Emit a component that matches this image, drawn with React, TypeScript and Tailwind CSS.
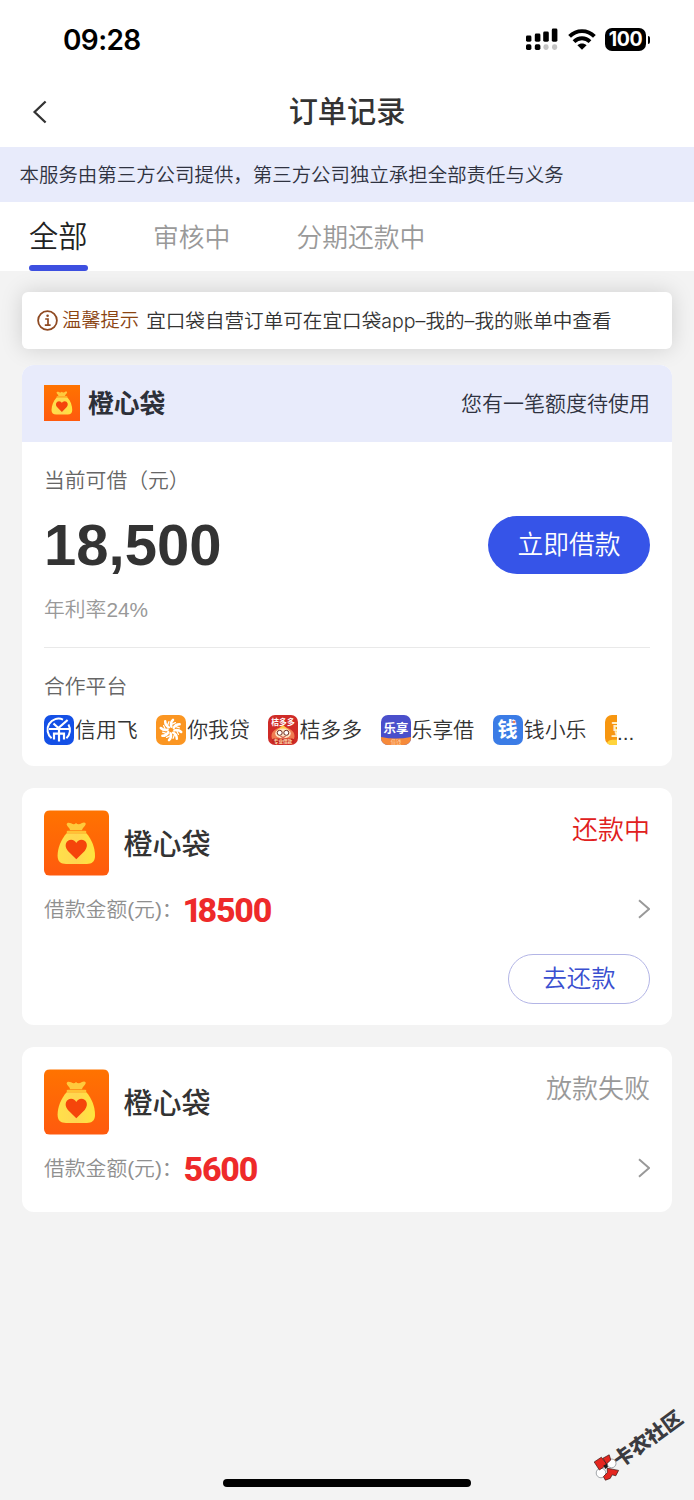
import { FC, ReactNode } from "react";

type IconProps = { className?: string };

const SignalIcon: FC = () => (
  <svg width="33" height="23" viewBox="0 0 33 23" className="shrink-0">
    <rect x="0" y="7.5" width="5.4" height="6.2" rx="1.4" />
    <rect x="8.8" y="5.5" width="5.6" height="8.2" rx="1.4" />
    <rect x="17.2" y="3.5" width="5.6" height="10.2" rx="1.4" />
    <rect x="25.8" y="0.5" width="5.6" height="13.2" rx="1.4" />
    <rect x="0" y="16.3" width="5.4" height="5.6" rx="1.6" />
    <rect x="8.8" y="16.3" width="5.6" height="5.6" rx="1.6" />
    <rect x="17.4" y="16.3" width="5.2" height="5.6" rx="2.4" fill="#c4c4c4" />
    <rect x="26" y="16.3" width="5.2" height="5.6" rx="2.4" fill="#c4c4c4" />
  </svg>
);

const WifiIcon: FC = () => (
  <svg width="28" height="21" viewBox="0 0 28 21" className="shrink-0">
    <g fill="none" stroke="#000" strokeWidth="3.9">
      <path d="M1.6 7.4 C8.6 0.4 19.4 0.4 26.4 7.4" />
      <path d="M6 12.6 C10.6 8.2 17.4 8.2 22 12.6" />
    </g>
    <path d="M14 20.8 L9.4 16.2 C12 13.8 16 13.8 18.6 16.2 Z" />
  </svg>
);

const ChevronLeft: FC = () => (
  <svg width="16" height="24" viewBox="0 0 16 24" fill="none">
    <path d="M13.6 1.5 L2.6 12 L13.6 22.5" stroke="#333" strokeWidth="2.3" />
  </svg>
);

const ChevronRight: FC = () => (
  <svg width="13" height="20" viewBox="0 0 13 20" fill="none">
    <path d="M2 1.2 L12 10 L2 18.8" stroke="#999" strokeWidth="1.9" />
  </svg>
);

const InfoIcon: FC = () => (
  <svg width="21" height="21" viewBox="0 0 21 21" fill="none" className="shrink-0">
    <circle cx="10.5" cy="10.5" r="9.4" stroke="#8f4a22" strokeWidth="1.8" />
    <circle cx="10.6" cy="5.8" r="1.3" fill="#8f4a22" />
    <path d="M8.2 9 H11 V15 M7.8 15.1 H13.6" stroke="#8f4a22" strokeWidth="1.7" />
  </svg>
);

const BagIcon: FC<IconProps> = ({ className }) => (
  <svg viewBox="0 0 66 66" className={className}>
    <defs>
      <linearGradient id="bagBack" x1="0" y1="0" x2="0" y2="1">
        <stop offset="0" stopColor="#ff7300" />
        <stop offset="1" stopColor="#ff5a0e" />
      </linearGradient>
      <linearGradient id="bagBody" x1="0" y1="0" x2="1" y2="0">
        <stop offset="0" stopColor="#ffe04a" />
        <stop offset="0.5" stopColor="#ffd650" />
        <stop offset="1" stopColor="#ffe63c" />
      </linearGradient>
    </defs>
    <rect width="66" height="66" fill="url(#bagBack)" />
    <path
      d="M26.5 20 C26 17.5 23.5 16.5 23 14.3 C23 12 25.5 12 27.5 13 C30 14.4 31 14.3 32.5 12.6 C34 14.3 36 14.3 38 13 C40.5 11.4 43 12 42.2 14.4 C41.5 16.4 39 17.5 38.5 20 Z"
      fill="#ffc93c"
    />
    <path
      d="M23 23 H43 C48.5 29 51.8 38 51.8 46 C51.8 52 48.5 54.3 43.5 54.3 H22.5 C17 54.3 13.8 52 13.8 46 C13.8 38 17.5 29 23 23 Z"
      fill="url(#bagBody)"
    />
    <rect x="23" y="20.6" width="20" height="2.6" rx="1.3" fill="#ffc234" />
    <path
      d="M32.8 49.5 L24.3 41 C19.5 35.5 23 29.8 27.5 29.8 C30 29.8 31.8 31.2 32.8 33 C33.8 31.2 35.6 29.8 38 29.8 C42.8 29.8 46 35.5 41.3 41 Z"
      fill="#f5450b"
    />
  </svg>
);

const XinyongfeiIcon: FC = () => (
  <svg width="30" height="30" viewBox="0 0 30 30" className="shrink-0">
    <rect width="30" height="30" rx="7" fill="#1450e6" />
    <path
      d="M19 4.6 A11 11 0 0 0 7.6 23.2 M24.4 9.4 A11 11 0 0 1 22.4 23.2"
      fill="none"
      stroke="#fff"
      strokeWidth="2"
    />
    <path
      d="M5 14 H25 M10 24.5 V18.6 H20 V24.5 M15 13 V26.5 M9.5 8.5 L14.4 13 L23.6 5"
      fill="none"
      stroke="#fff"
      strokeWidth="2.2"
    />
  </svg>
);

const NiwodaiIcon: FC = () => (
  <svg width="30" height="30" viewBox="0 0 30 30" className="shrink-0">
    <rect width="30" height="30" rx="7" fill="#fb9622" />
    <g fill="none" stroke="#fff" strokeWidth="2.5" strokeLinecap="round">
      {[0, 45, 90, 135, 180, 225, 270, 315].map((angle) => (
        <path key={angle} d="M15.4 11.6 C14.4 9 14.8 7 17 4.8" transform={`rotate(${angle} 15 15)`} />
      ))}
    </g>
    <g fill="none" stroke="#fff" strokeWidth="1.3" strokeLinecap="round">
      {[0, 45, 90, 135, 180, 225, 270, 315].map((angle) => (
        <path key={angle} d="M15 9.6 L19.4 7.6" transform={`rotate(${angle} 15 15)`} />
      ))}
    </g>
  </svg>
);

const JuduoduoIcon: FC = () => (
  <svg width="30" height="30" viewBox="0 0 30 30" className="shrink-0 font-['Noto_Sans_CJK_SC',sans-serif]">
    <rect width="30" height="30" rx="7" fill="#cf2b27" />
    <path d="M4 24 C2 18 6 13 15 12 C24 13 28 18 26 24 Z" fill="#ef7a50" />
    <path d="M9 15 L15 10 L21 15 Z" fill="#ffc648" />
    <ellipse cx="15" cy="18.5" rx="7.8" ry="5" fill="#ffe3c4" />
    <circle cx="11.7" cy="17.8" r="2.5" fill="#fff" stroke="#6d2a20" strokeWidth="1" />
    <circle cx="18.3" cy="17.8" r="2.5" fill="#fff" stroke="#6d2a20" strokeWidth="1" />
    <path d="M12.5 21.5 Q15 23.2 17.5 21.5" fill="none" stroke="#c23022" strokeWidth="1" />
    <text x="15" y="9.8" textAnchor="middle" fontSize="7.8" fontWeight="700" fill="#fff">
      桔多多
    </text>
    <rect x="4" y="23.6" width="22" height="5" rx="2" fill="#c3261f" />
    <text x="15" y="27.9" textAnchor="middle" fontSize="4.6" fontWeight="700" fill="#ffdcb0">
      专业借款
    </text>
  </svg>
);

const LexiangIcon: FC = () => (
  <svg width="30" height="30" viewBox="0 0 30 30" className="shrink-0 font-['Noto_Sans_CJK_SC',sans-serif]">
    <rect width="30" height="30" rx="7" fill="#4a4fcb" />
    <path d="M0 22 Q15 25 30 22 V23 A7 7 0 0 1 23 30 H7 A7 7 0 0 1 0 23 Z" fill="#f68a3a" />
    <text x="15" y="17.6" textAnchor="middle" fontSize="12.4" fontWeight="700" fill="#fff">
      乐享
    </text>
    <text x="15" y="28.6" textAnchor="middle" fontSize="5.2" fill="#ffd9b5">
      借钱
    </text>
  </svg>
);

const QianxiaoleIcon: FC = () => (
  <svg width="30" height="30" viewBox="0 0 30 30" className="shrink-0 font-['Noto_Sans_CJK_SC',sans-serif]">
    <rect width="30" height="30" rx="7" fill="#3b7ce6" />
    <text x="14.6" y="22.4" textAnchor="middle" fontSize="20" fontWeight="700" fill="#fff">
      钱
    </text>
    <circle cx="21" cy="7" r="1.3" fill="#f0805a" />
  </svg>
);

const ClippedIcon: FC = () => (
  <svg width="12" height="30" viewBox="0 0 12 30" className="shrink-0 font-['Noto_Sans_CJK_SC',sans-serif]">
    <path d="M7 0 H12 V30 H7 A7 7 0 0 1 0 23 V7 A7 7 0 0 1 7 0 Z" fill="#f7960f" />
    <path d="M2 28 C4 24 8 25 12 24.5 V30 H7 C5 30 3 29.4 2 28 Z" fill="#ffd43c" />
    <text x="6" y="20.5" fontSize="17" fontWeight="700" fill="#fff2c8">
      豆
    </text>
  </svg>
);

const MascotIcon: FC = () => (
  <svg width="28" height="28" viewBox="0 0 28 28" className="shrink-0">
    <circle cx="8" cy="20" r="4.8" fill="#fff" stroke="#8b9095" strokeWidth="0.8" />
    <circle cx="18.6" cy="10.4" r="4.4" fill="#fff" stroke="#8b9095" strokeWidth="0.8" />
    <g fill="#e4261f" stroke="#3a1513" strokeWidth="0.7">
      <path d="M1.2 9 L8.4 4.2 L14 11.6 L6.4 17 Z" />
      <path d="M10 5.2 L16.2 1.8 L17.8 7 L13.4 11 Z" />
      <path d="M14.2 15.2 L25.6 17.4 L22.8 22.8 L19.2 21.8 L17.2 25.4 L12.4 27.2 L10.4 23.6 L14.4 19.6 Z" />
    </g>
    <path d="M10.4 12.6 L14 10.8 L15 14 L12.2 16 Z" fill="#1d1d1d" />
  </svg>
);

const partners = [
  { name: "信用飞", icon: <XinyongfeiIcon /> },
  { name: "你我贷", icon: <NiwodaiIcon /> },
  { name: "桔多多", icon: <JuduoduoIcon /> },
  { name: "乐享借", icon: <LexiangIcon /> },
  { name: "钱小乐", icon: <QianxiaoleIcon /> },
];

type OrderProps = {
  amount: string;
  status: string;
  statusClass: string;
  className: string;
  children?: ReactNode;
};

const OrderCard: FC<OrderProps> = ({ amount, status, statusClass, className, children }) => (
  <section className={`rounded-xl bg-white px-[22px] pt-[22px] ${className}`}>
    <div className="flex h-[66px]">
      <BagIcon className="h-[66px] w-[65px] rounded-md" />
      <h3 className="ml-[14.5px] text-[29px] leading-[70px] font-medium">橙心袋</h3>
      <span className={`ml-auto text-[26px] leading-10 font-[350] ${statusClass}`}>{status}</span>
    </div>
    <div className="mt-[14px] flex h-10 items-center">
      <span className="w-[139.5px] text-[20.8px] whitespace-nowrap font-[350] text-[#8f8f8f]">借款金额(元)：</span>
      <span className="font-['Roboto',sans-serif] text-[34px] font-extrabold tracking-[-1.2px] text-[#ee2a2a]">
        {amount.startsWith("1") ? (
          <>
            <span className="-ml-px tracking-[-4.6px]">1</span>
            {amount.slice(1)}
          </>
        ) : (
          amount
        )}
      </span>
      <span className="-mt-0.5 ml-auto">
        <ChevronRight />
      </span>
    </div>
    {children}
  </section>
);

export default function App() {
  return (
    <div className="relative flex h-[1500px] w-[694px] flex-col overflow-hidden bg-[#f3f3f3] font-['Liberation_Sans','Noto_Sans_CJK_SC',sans-serif] text-[#333]">
      <div className="flex h-[76px] items-center bg-white pt-[3px] pr-[44px] pl-[63px]">
        <span className="font-['Inter',sans-serif] text-[28px] font-semibold tracking-[-0.6px] text-black">
          09:28
        </span>
        <div className="ml-auto flex items-center">
          <SignalIcon />
          <span className="ml-[9px]">
            <WifiIcon />
          </span>
          <span className="ml-[9px] flex h-[23px] w-[41px] items-center justify-center rounded-[7px] bg-black pt-px font-['Inter',sans-serif] text-[19.5px] font-bold tracking-[-0.4px] text-white">
            100
          </span>
          <span className="ml-0.5 h-2 w-0.5 rounded-r-full bg-black" />
        </div>
      </div>

      <header className="grid h-[71px] grid-cols-3 items-center bg-white px-8">
        <button type="button">
          <ChevronLeft />
        </button>
        <h1 className="pt-[3px] text-center text-[29.2px] font-medium">订单记录</h1>
      </header>

      <p className="h-[55px] bg-[#e8ebfb] pl-[19.5px] text-[19.45px] leading-[56px] font-[350] text-[#2f3240]">
        本服务由第三方公司提供，第三方公司独立承担全部责任与义务
      </p>

      <nav className="flex h-[69px] bg-white pl-[29px] text-[25.8px] leading-[72px] font-[350] whitespace-nowrap text-[#999]">
        <span className="flex h-full w-[58px] flex-col justify-between text-[29.2px] text-[#222]">
          <span className="h-[63px] leading-[70px]">全部</span>
          <span className="h-[6px] w-[59px] rounded-full bg-[#3d4fe0]" />
        </span>
        <span className="ml-[66px]">审核中</span>
        <span className="ml-[66px]">分期还款中</span>
      </nav>

      <main className="flex flex-col px-[22px] pt-[21px]">
        <div className="flex h-[57px] items-center rounded-md bg-white pl-[15px] text-[19.3px] leading-8 font-[350] whitespace-nowrap shadow-[0_0_22px_rgba(0,0,0,0.15)]">
          <InfoIcon />
          <span className="ml-1 text-[#8b4513]">温馨提示</span>
          <span className="ml-[7px] font-['Inter','Noto_Sans_CJK_SC',sans-serif] text-[19.6px]">
            宜口袋自营订单可在宜口袋app–我的–我的账单中查看
          </span>
        </div>

        <section className="mt-4 h-[401px] overflow-hidden rounded-xl bg-white">
          <div className="flex h-[77px] items-center bg-[#e8ebfb] px-[22px]">
            <BagIcon className="mb-px h-9 w-9" />
            <h2 className="ml-2 pt-0.5 text-[25.8px] font-bold text-[#2d3039]">橙心袋</h2>
            <span className="ml-auto text-[21px] font-[350] text-[#2f3240]">您有一笔额度待使用</span>
          </div>
          <div className="px-[22px]">
            <p className="pt-[21px] text-[20.8px] leading-9 font-[350] text-[#666]">当前可借（元）</p>
            <div className="mt-[17px] flex h-[58px] items-center">
              <span className="pb-0.5 text-[58px] font-bold">18,500</span>
              <button
                type="button"
                className="ml-auto h-[58px] w-[162px] rounded-full bg-[#3654e8] text-[25.8px] font-[350] text-white"
              >
                立即借款
              </button>
            </div>
            <p className="mt-[18px] h-14 border-b border-[#e9e9e9] text-[20.8px] leading-9 font-[350] text-[#999]">
              年利率24%
            </p>
            <p className="mt-[21px] text-[20.8px] leading-9 font-[350] text-[#666]">合作平台</p>
            <div className="mt-2.5 flex h-[30px] items-center text-[20.9px] font-[350]">
              {partners.map((partner) => (
                <span key={partner.name} className="flex w-[112.2px] shrink-0 items-center">
                  {partner.icon}
                  <span className="ml-px">{partner.name}</span>
                </span>
              ))}
              <ClippedIcon />
              <span className="pt-1.5">...</span>
            </div>
          </div>
        </section>

        <OrderCard amount="18500" status="还款中" statusClass="text-[#e02020]" className="mt-[22px] h-[237px]">
          <button
            type="button"
            className="mt-6 ml-auto block h-[50px] w-[142px] rounded-full border-[1.5px] border-[#b3b5e6] text-[24.3px] font-[350] text-[#3a4fd0]"
          >
            去还款
          </button>
        </OrderCard>

        <OrderCard
          amount="5600"
          status="放款失败"
          statusClass="text-[#999]"
          className="mt-[22px] h-[165px]"
        />
      </main>

      <div className="mx-auto mt-auto mb-[13px] h-2 w-[248px] rounded-full bg-black" />

      <div className="absolute top-[1453px] left-[593px]">
        <MascotIcon />
      </div>
      <span className="absolute top-[1425px] left-[608px] -rotate-[36deg] text-[20px] leading-7 font-black whitespace-nowrap text-[#3b3b40]">
        卡农社区
      </span>
    </div>
  );
}
